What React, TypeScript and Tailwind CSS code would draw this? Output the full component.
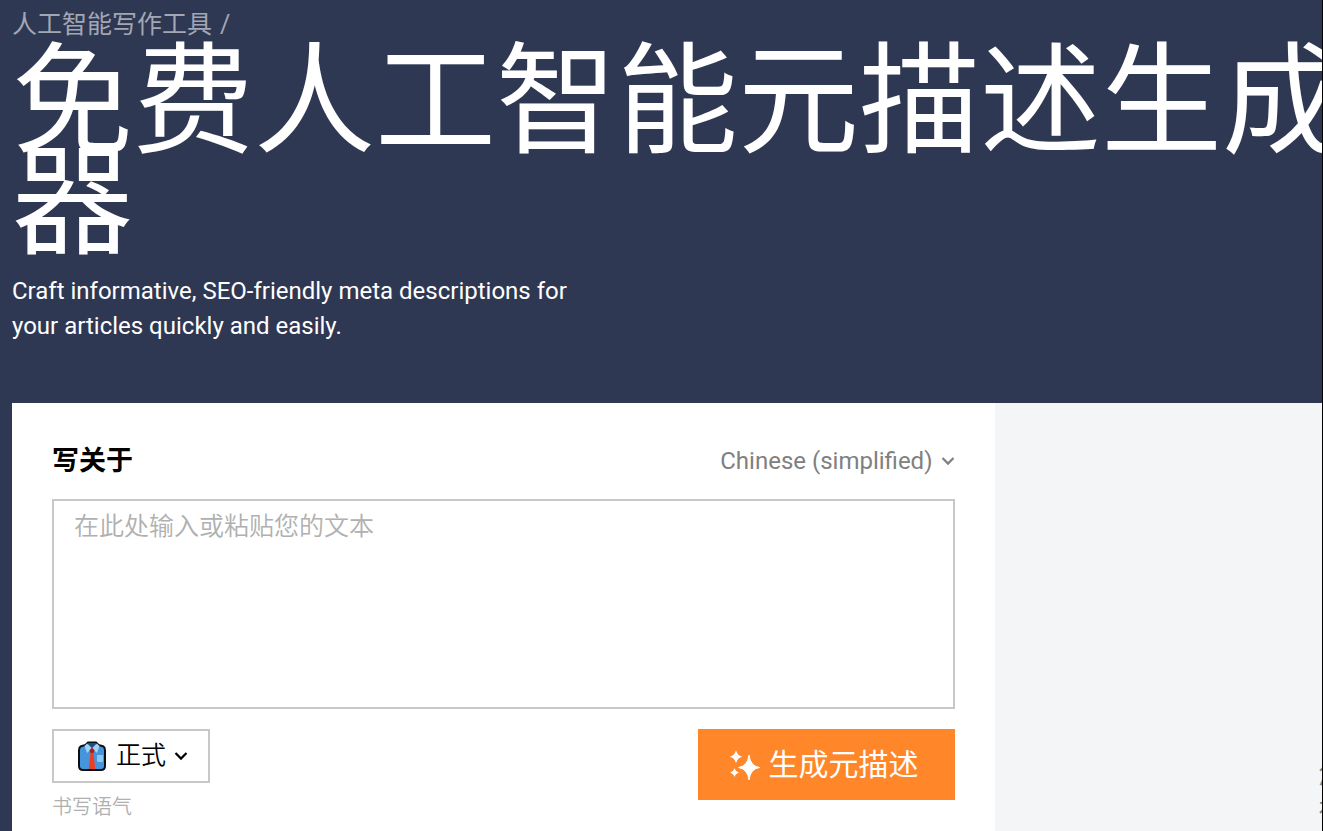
import React from "react";

function Chevron({ className }: { className: string }) {
  return (
    <svg viewBox="0 0 14 10" className={className} fill="none" stroke="currentColor" strokeWidth="2.2" aria-hidden="true">
      <path d="M1.500 2 7 7.600 12.500 2" />
    </svg>
  );
}

function ShirtIcon() {
  return (
    <svg viewBox="0 0 28 30" className="h-[30px] w-7 shrink-0" aria-hidden="true">
      <path d="M7.500 4 10 1.500h8L20.500 4l4.500 1.200q2 1 2 4V25q0 4-4 4H5q-4 0-4-4V9.200q0-3 2-4Z" fill="#4595dc" stroke="#0b0f14" strokeWidth="2" strokeLinejoin="round" />
      <path d="M9 2h10l-5 5Z" fill="#1a4f80" />
      <path d="M9 2.500 14 7.500 9 12 6.500 5ZM19 2.500 14 7.500l5 4.500 2.500-7Z" fill="#9fd2f7" />
      <path d="m14 7.500-2 2.500.5 2L10.800 28h6.400L15.500 12l.5-2Z" fill="#ee3d24" />
      <path d="m14 6.500-2.600 3 1.300 2.500h2.600l1.300-2.500Z" fill="#a81f22" />
      <path d="M19 14h6v5.500q0 1.500-1.500 1.500h-3Q19 21 19 19.500Z" fill="#8cc8f2" />
    </svg>
  );
}

function SparkleIcon() {
  return (
    <svg viewBox="0 0 32 32" className="size-8 shrink-0" fill="currentColor" aria-hidden="true">
      <path d="M20 6Q21.300 17 30.500 18.500 21.300 20 20 31 18.700 20 9.500 18.500 18.700 17 20 6Z" stroke="currentColor" strokeLinejoin="round" />
      <path d="M7 1Q8 6.500 13.500 7.800 8 9 7 14.500 6 9 .5 7.800 6 6.500 7 1Z" />
      <path d="M5.500 19Q6.500 22.500 10 23.500 6.500 24.500 5.500 28 4.500 24.500 1 23.500 4.500 22.500 5.500 19Z" />
    </svg>
  );
}

export default function App() {
  return (
    <div className="h-screen overflow-hidden border-r border-black bg-[#2f3853] font-['Roboto','Noto_Sans_CJK_SC',sans-serif]">
      <header className="pl-3 text-white">
        <nav className="flex h-12 items-center text-[25px] leading-none text-[#a3a7b4]">
          <a href="#tools">人工智能写作工具</a>
          <span className="pl-2">/</span>
        </nav>
        <h1 className="mt-1 -mr-20 text-[121px] leading-[101px]">免费人工智能元描述生成器</h1>
        <p className="mt-5 max-w-[600px] text-2xl leading-[35px]">
          Craft informative, SEO-friendly meta descriptions for your articles quickly and easily.
        </p>
      </header>

      <main className="mt-[59px] ml-3 flex min-h-[440px] bg-[#f3f5f7]">
        <form className="w-3/4 shrink-0 bg-white px-10 pt-9" onSubmit={(e) => e.preventDefault()}>
          <div className="flex h-11 items-center justify-between">
            <label htmlFor="topic" className="text-[27px] font-bold text-black">写关于</label>
            <div className="flex items-center gap-2 text-[#808080]">
              <select aria-label="语言" className="field-sizing-content appearance-none bg-transparent text-2xl outline-none">
                <option>Chinese (simplified)</option>
              </select>
              <Chevron className="h-[10px] w-[14px]" />
            </div>
          </div>
          <textarea
            id="topic"
            placeholder="在此处输入或粘贴您的文本"
            className="mt-4 block h-[210px] w-full resize-none border-2 border-[#c8c8c8] px-5 py-2 text-[25px] leading-9 font-[350] outline-none placeholder:text-[#b0b0b0]"
          />
          <div className="mt-5 flex items-start justify-between">
            <div>
              <div className="flex h-[54px] items-center border-2 border-[#c8c8c8] pr-5 pl-6 text-black">
                <ShirtIcon />
                <select id="tone" className="field-sizing-content ml-[10px] appearance-none bg-transparent text-[25px] font-[350] outline-none">
                  <option>正式</option>
                </select>
                <Chevron className="ml-2 h-[10px] w-[14px]" />
              </div>
              <label htmlFor="tone" className="mt-[10px] block text-xl font-[350] text-[#b0b0b0]">书写语气</label>
            </div>
            <button type="submit" className="flex h-[71px] items-center gap-2 bg-[#ff8629] pr-9 pl-[31px] text-3xl text-white">
              <SparkleIcon />
              生成元描述
            </button>
          </div>
        </form>
        <aside className="min-w-0 flex-1 overflow-hidden pt-[355px] pl-[324px]">
          <p className="text-[25px] leading-[35px] whitespace-nowrap text-[#808080]">
            您的
            <br />
            在此
          </p>
        </aside>
      </main>
    </div>
  );
}
